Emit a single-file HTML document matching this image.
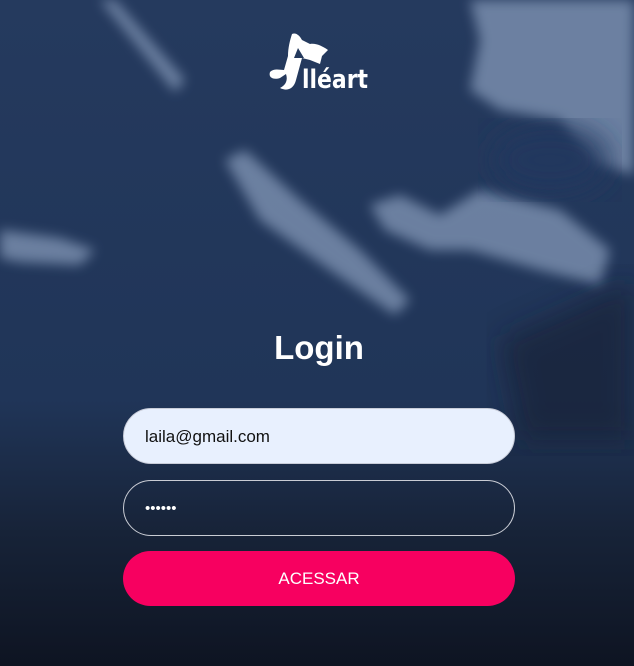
<!DOCTYPE html>
<html><head><meta charset="utf-8"><style>
html,body{margin:0;padding:0;width:634px;height:666px;overflow:hidden;font-family:"Liberation Sans",sans-serif;background:#22375a}
.bg{position:absolute;left:0;top:0;width:634px;height:666px}
.logo{position:absolute;left:266px;top:30px;width:110px;height:62px}
h1{position:absolute;left:0;width:638px;top:327px;margin:0;text-align:center;color:#fff;font-family:"Liberation Sans",sans-serif;font-weight:bold;font-size:33px;line-height:42px}
.f{position:absolute;left:123px;width:392px;height:56px;border-radius:28px;box-sizing:border-box;font-size:17px;line-height:56px;padding-left:21px}
.e{top:408px;background:#e8f0fe;color:#111;border:1px solid #c8ccd8}
.p{top:480px;border:1px solid #c9ccd4;color:#fff;font-size:15px}
.b{top:551px;height:55px;background:#f70060;color:#fff;text-align:center;padding:0;line-height:56px;font-size:17px}
</style></head><body>
<svg class="bg" viewBox="0 0 634 666">
<defs>
<linearGradient id="g" x1="0" y1="0" x2="0" y2="1">
<stop offset="0" stop-color="#253a5e"/><stop offset="0.6" stop-color="#203558"/><stop offset="0.8" stop-color="#172338"/><stop offset="1" stop-color="#0e1422"/></linearGradient>
<filter id="bl"><feGaussianBlur stdDeviation="6"/></filter>
<filter id="bl2"><feGaussianBlur stdDeviation="14"/></filter>
</defs>
<rect width="634" height="666" fill="url(#g)"/>
<g filter="url(#bl)" fill="#9cb0cf" opacity="0.6">
<polygon points="470,0 634,0 634,175 590,160 560,120 500,110 470,90 480,40"/>
<polygon points="225,160 245,150 300,200 360,250 410,300 395,315 330,270 260,220"/>
<polygon points="370,205 400,195 440,215 480,190 560,210 610,250 600,285 540,270 470,250 430,250 385,230"/>
<polygon points="0,230 60,238 95,250 80,265 20,262 0,258"/>
<polygon points="100,0 115,0 185,80 175,92"/>
</g>
<g filter="url(#bl2)" fill="#24395f" opacity="0.9">
<ellipse cx="550" cy="160" rx="60" ry="35"/>
</g>
<g filter="url(#bl2)" fill="#121c2e" opacity="0.55">
<polygon points="500,340 634,280 634,440 520,440"/>
</g>
</svg>
<svg class="logo" viewBox="0 0 110 62">
<path d="M26 4 C30 2 34 6 36 10 L44 14 C50 13 56 16 62 20 L56 26 L54 34 L44 30 L36 28 L30 50 C28 58 22 62 14 58 C20 55 22 50 20 44 L14 48 C8 50 2 48 4 42 C8 38 14 40 18 40 L22 26 C22 18 24 10 26 4 Z M32 18 L28 28 L38 28 Z" fill="#fff"/>
<text x="36" y="58" font-family="DejaVu Sans,sans-serif" font-weight="bold" font-size="26" fill="#fff" textLength="66" lengthAdjust="spacingAndGlyphs">lléart</text>
</svg>
<h1>Login</h1>
<div class="f e">laila@gmail.com</div>
<div class="f p">••••••</div>
<div class="f b">ACESSAR</div>
</body></html>
